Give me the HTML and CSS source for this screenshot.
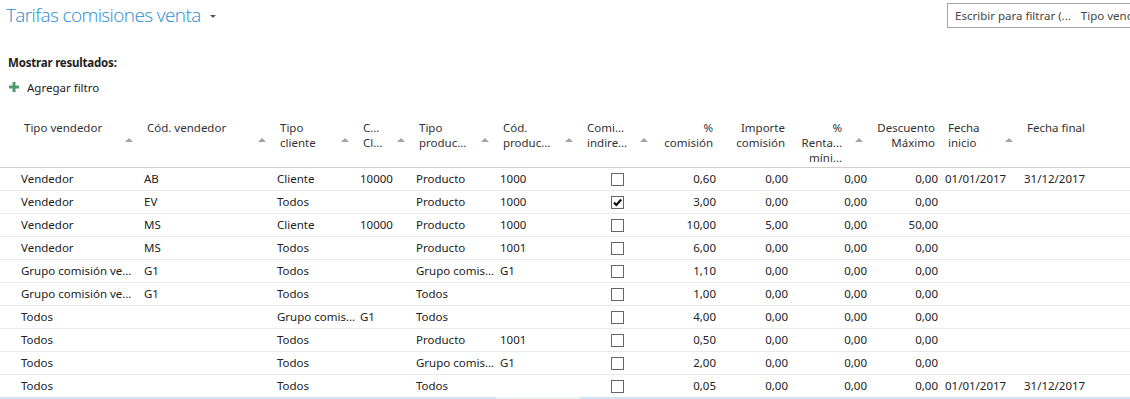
FILE: index.html
```html
<!DOCTYPE html>
<html lang="es">
<head>
    <meta charset="UTF-8">
    <title>Tarifas comisiones venta</title>
    <link rel="stylesheet" href="styles.css">
</head>
<body>
<div class="topbar">
    <h1 class="title">Tarifas comisiones venta <span class="caret"></span></h1>
    <div class="search">
        <span class="search-text">Escribir para filtrar (...</span>
        <span class="search-sep"></span>
        <span class="search-field">Tipo vendedor</span>
    </div>
</div>
<div class="filters">
    <div class="filters-label">Mostrar resultados:</div>
    <div class="add-filter">
        <svg class="plus" width="10" height="10" viewBox="0 0 10 10"><path d="M3.5 0h3v3.5H10v3H6.5V10h-3V6.5H0v-3h3.5z" fill="#4f9a6c"/></svg>
        Agregar filtro
    </div>
</div>
<table class="grid">
    <colgroup>
        <col style="width:16px"><col style="width:123px"><col style="width:133px"><col style="width:83px">
        <col style="width:56px"><col style="width:84px"><col style="width:84px"><col style="width:75px">
        <col style="width:64px"><col style="width:72px"><col style="width:79px"><col style="width:71px">
        <col style="width:79px"><col style="width:111px">
    </colgroup>
    <thead>
        <tr>
            <th></th>
            <th><div class="hd"><span class="hd-text">Tipo vendedor</span><i class="sort"></i></div></th>
            <th><div class="hd"><span class="hd-text">Cód. vendedor</span><i class="sort"></i></div></th>
            <th><div class="hd"><span class="hd-text">Tipo<br>cliente</span><i class="sort"></i></div></th>
            <th><div class="hd"><span class="hd-text">C…<br>Cl…</span><i class="sort"></i></div></th>
            <th><div class="hd"><span class="hd-text">Tipo<br>produc…</span><i class="sort"></i></div></th>
            <th><div class="hd"><span class="hd-text">Cód.<br>produc…</span><i class="sort"></i></div></th>
            <th><div class="hd"><span class="hd-text">Comi…<br>indire…</span><i class="sort"></i></div></th>
            <th class="num"><div class="hd"><span class="hd-text">%<br>comisión</span></div></th>
            <th class="num"><div class="hd"><span class="hd-text">Importe<br>comisión</span></div></th>
            <th class="num"><div class="hd"><span class="hd-text">%<br>Renta…<br>míni…</span><i class="sort sort-num"></i></div></th>
            <th class="num"><div class="hd"><span class="hd-text">Descuento<br>Máximo</span></div></th>
            <th><div class="hd"><span class="hd-text">Fecha<br>inicio</span><i class="sort"></i></div></th>
            <th><div class="hd"><span class="hd-text">Fecha final</span></div></th>
        </tr>
    </thead>
    <tbody>
        <tr>
            <td></td><td>Vendedor</td><td>AB</td><td>Cliente</td><td>10000</td><td>Producto</td><td>1000</td>
            <td class="chk"><span class="box"></span></td>
            <td class="num">0,60</td><td class="num">0,00</td><td class="num">0,00</td><td class="num">0,00</td><td>01/01/2017</td><td>31/12/2017</td>
        </tr>
        <tr>
            <td></td><td>Vendedor</td><td>EV</td><td>Todos</td><td></td><td>Producto</td><td>1000</td>
            <td class="chk"><span class="box"><svg width="11" height="11" viewBox="0 0 11 11"><path d="M2 5.6 4.4 8 9.2 2.6" fill="none" stroke="#111" stroke-width="2.2"/></svg></span></td>
            <td class="num">3,00</td><td class="num">0,00</td><td class="num">0,00</td><td class="num">0,00</td><td></td><td></td>
        </tr>
        <tr>
            <td></td><td>Vendedor</td><td>MS</td><td>Cliente</td><td>10000</td><td>Producto</td><td>1000</td>
            <td class="chk"><span class="box"></span></td>
            <td class="num">10,00</td><td class="num">5,00</td><td class="num">0,00</td><td class="num">50,00</td><td></td><td></td>
        </tr>
        <tr>
            <td></td><td>Vendedor</td><td>MS</td><td>Todos</td><td></td><td>Producto</td><td>1001</td>
            <td class="chk"><span class="box"></span></td>
            <td class="num">6,00</td><td class="num">0,00</td><td class="num">0,00</td><td class="num">0,00</td><td></td><td></td>
        </tr>
        <tr>
            <td></td><td>Grupo comisión ve…</td><td>G1</td><td>Todos</td><td></td><td>Grupo comis…</td><td>G1</td>
            <td class="chk"><span class="box"></span></td>
            <td class="num">1,10</td><td class="num">0,00</td><td class="num">0,00</td><td class="num">0,00</td><td></td><td></td>
        </tr>
        <tr>
            <td></td><td>Grupo comisión ve…</td><td>G1</td><td>Todos</td><td></td><td>Todos</td><td></td>
            <td class="chk"><span class="box"></span></td>
            <td class="num">1,00</td><td class="num">0,00</td><td class="num">0,00</td><td class="num">0,00</td><td></td><td></td>
        </tr>
        <tr>
            <td></td><td>Todos</td><td></td><td>Grupo comis…</td><td>G1</td><td>Todos</td><td></td>
            <td class="chk"><span class="box"></span></td>
            <td class="num">4,00</td><td class="num">0,00</td><td class="num">0,00</td><td class="num">0,00</td><td></td><td></td>
        </tr>
        <tr>
            <td></td><td>Todos</td><td></td><td>Todos</td><td></td><td>Producto</td><td>1001</td>
            <td class="chk"><span class="box"></span></td>
            <td class="num">0,50</td><td class="num">0,00</td><td class="num">0,00</td><td class="num">0,00</td><td></td><td></td>
        </tr>
        <tr>
            <td></td><td>Todos</td><td></td><td>Todos</td><td></td><td>Grupo comis…</td><td>G1</td>
            <td class="chk"><span class="box"></span></td>
            <td class="num">2,00</td><td class="num">0,00</td><td class="num">0,00</td><td class="num">0,00</td><td></td><td></td>
        </tr>
        <tr class="last">
            <td></td><td>Todos</td><td></td><td>Todos</td><td></td><td>Todos</td><td></td>
            <td class="chk"><span class="box"></span></td>
            <td class="num">0,05</td><td class="num">0,00</td><td class="num">0,00</td><td class="num">0,00</td><td>01/01/2017</td><td>31/12/2017</td>
        </tr>
    </tbody>
</table>
<div class="hscroll"></div>
</body>
</html>
```
FILE: styles.css
```css
html, body {
    margin: 0;
    padding: 0;
    overflow: hidden;
}
body {
    width: 1130px;
    height: 399px;
    font-family: "Noto Sans", "Open Sans", sans-serif;
    font-size: 11.5px;
    color: #222;
    background-color: #fff;
}
.topbar {
    display: flex;
    align-items: flex-start;
    height: 40px;
}
.title {
    margin: 0;
    padding: 2px 0 0 6px;
    font-family: "Open Sans", "Noto Sans", sans-serif;
    font-weight: 300;
    font-size: 19px;
    letter-spacing: -0.6px;
    line-height: 26px;
    color: #2a8bd3;
    display: flex;
    align-items: center;
}
.caret {
    width: 0;
    height: 0;
    border-left: 3px solid transparent;
    border-right: 3px solid transparent;
    border-top: 3px solid #555;
    margin-left: 9px;
    margin-top: 2px;
}
.search {
    margin-left: auto;
    margin-top: 3px;
    margin-right: -20px;
    box-sizing: border-box;
    width: 203px;
    height: 25px;
    border: 1px solid #a6a6a6;
    padding-left: 7px;
    display: flex;
    align-items: center;
    white-space: nowrap;
    overflow: hidden;
    color: #444;
}
.search-sep {
    width: 1px;
    height: 15px;
    background-color: #999;
    margin: 0 5px;
}
.filters {
    padding-left: 8px;
}
.filters-label {
    margin-top: 15px;
    line-height: 16px;
    font-weight: bold;
    letter-spacing: -0.2px;
    color: #222;
}
.add-filter {
    display: flex;
    align-items: center;
    height: 16px;
    margin-top: 8px;
    padding-left: 1px;
}
.plus {
    margin-right: 8px;
}
.grid {
    margin-top: 17px;
    width: 1130px;
    border-collapse: collapse;
    table-layout: fixed;
}
.grid th {
    height: 55px;
    box-sizing: border-box;
    padding: 8px 6px 0 8px;
    vertical-align: top;
    text-align: left;
    font-weight: normal;
    line-height: 15px;
    color: #333;
    border-bottom: 1px solid #cfcfcf;
}
.grid th.num {
    padding-right: 5px;
}
.hd {
    display: flex;
    align-items: flex-start;
}
.hd-text {
    flex: 1;
    white-space: nowrap;
    overflow: hidden;
}
.num .hd-text {
    text-align: right;
}
.sort {
    flex: none;
    width: 0;
    height: 0;
    margin-top: 18px;
    border-left: 4px solid transparent;
    border-right: 4px solid transparent;
    border-bottom: 4px solid #a3a3a3;
}
.sort-num {
    margin-left: 13px;
    margin-right: 1px;
}
.grid td {
    height: 22px;
    padding: 0 4px 0 5px;
    white-space: nowrap;
    overflow: hidden;
    border-bottom: 1px solid #e9e9e9;
}
.grid td.num {
    text-align: right;
    padding-right: 2px;
}
.grid tr.last td {
    border-bottom: none;
}
.grid td.chk {
    text-align: center;
    padding: 0;
}
.box {
    display: inline-flex;
    align-items: center;
    justify-content: center;
    box-sizing: border-box;
    width: 13px;
    height: 13px;
    border: 1px solid #666;
    vertical-align: middle;
    margin-left: 2px;
}
.hscroll {
    height: 2px;
    background: linear-gradient(to right, #cfe5f7 0, #cfe5f7 496px, #eef3f7 496px, #eef3f7 580px, #cfe5f7 580px);
}
```
